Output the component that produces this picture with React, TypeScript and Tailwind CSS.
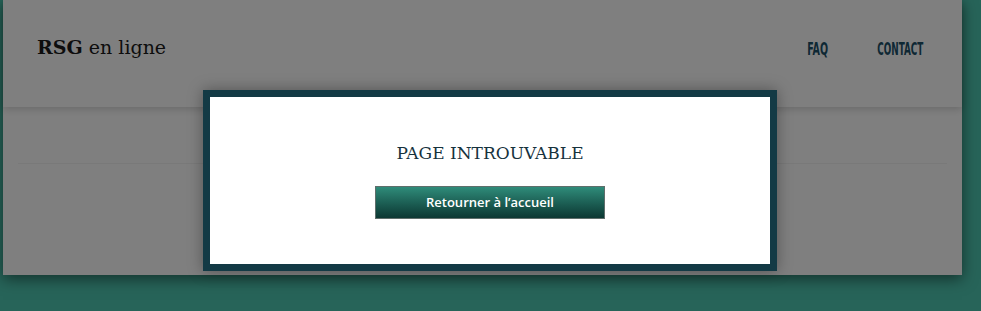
export default function App() {
  return (
    <div className="relative h-[311px] w-full overflow-hidden bg-[#4ec8b2]">
      {/* page behind the overlay */}
      <div className="ml-[3px] h-[275px] w-[959px] bg-white shadow-[0_4px_14px_rgba(0,0,0,0.5)]">
        <header className="flex h-[107px] items-start justify-between pl-[34px] pr-[38px] pt-[35px] shadow-[0_2px_8px_rgba(0,0,0,0.18)]">
          <div className="text-[19px] leading-[24px] text-[#1a1a1a] [font-family:'DejaVu_Serif',serif]">
            <span className="font-bold">RSG</span> en ligne
          </div>
          <nav className="flex pt-[4px] text-[17px] font-bold leading-[20px] text-[#1c5068] [font-family:'DejaVu_Sans',sans-serif]">
            <a className="inline-flex w-[20px] justify-center">
              <span className="inline-block scale-x-[0.56]">FAQ</span>
            </a>
            <a className="ml-[49px] inline-flex w-[47px] justify-center">
              <span className="inline-block scale-x-[0.52]">CONTACT</span>
            </a>
          </nav>
        </header>
        <div className="px-[15px] pt-[56px]">
          <div className="h-px bg-[#f3f3f3]" />
        </div>
      </div>

      {/* overlay */}
      <div className="absolute inset-0 bg-black/50" />

      {/* modal */}
      <div className="absolute left-[203px] top-[90px] h-[181px] w-[574px] border-[7px] border-[#133a45] bg-white shadow-[0_0_14px_rgba(0,0,0,0.35)]">
        <div className="flex flex-col items-center pt-[45px]">
          <h1 className="text-[17px] leading-[22px] text-[#16323d] [font-family:'DejaVu_Serif',serif]">PAGE INTROUVABLE</h1>
          <button className="mt-[22px] h-[33px] w-[230px] border border-[#5f6e6b] bg-gradient-to-b from-[#2f8c7a] to-[#0c3833] text-[13px] font-semibold text-white [font-family:'Open_Sans',sans-serif]">
            Retourner à l’accueil
          </button>
        </div>
      </div>
    </div>
  );
}
